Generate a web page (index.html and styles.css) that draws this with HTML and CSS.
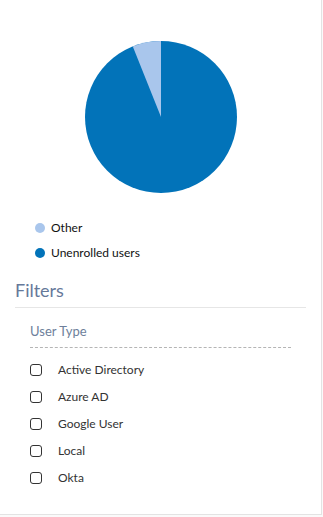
FILE: index.html
```html
<!DOCTYPE html>
<html>
<head>
<meta charset="utf-8">
<link rel="stylesheet" href="styles.css">
</head>
<body>
<div class="card">
  <div class="chart">
    <svg width="154" height="154" viewBox="-77 -77 154 154">
      <circle cx="0" cy="0" r="76" fill="#0273b9"/>
      <path d="M0 0 L0 -76 A76 76 0 0 0 -28.2 -70.6 Z" fill="#a9c6ec"/>
    </svg>
  </div>
  <ul class="legend">
    <li><span class="dot light"></span>Other</li>
    <li><span class="dot dark"></span>Unenrolled users</li>
  </ul>
  <h2 class="filters-title">Filters</h2>
  <div class="group">
    <div class="group-title">User Type</div>
    <ul class="options">
      <li><span class="box"></span>Active Directory</li>
      <li><span class="box"></span>Azure AD</li>
      <li><span class="box"></span>Google User</li>
      <li><span class="box"></span>Local</li>
      <li><span class="box"></span>Okta</li>
    </ul>
  </div>
</div>
</body>
</html>
```
FILE: styles.css
```css
html, body {
  margin: 0;
  padding: 0;
  background: #fafafa;
}
body {
  font-family: Lato, "Open Sans", sans-serif;
}
.card {
  width: 321px;
  height: 514px;
  background: #fff;
  border-right: 1px solid #e3e3e3;
  border-bottom: 1px solid #e3e3e3;
  box-sizing: content-box;
}
.chart {
  display: flex;
  justify-content: center;
  padding-top: 40px;
  padding-left: 1px;
}
.chart svg {
  display: block;
}
.legend {
  list-style: none;
  margin: 0;
  padding: 21px 0 0 35px;
}
.legend li {
  display: flex;
  align-items: center;
  height: 25px;
  font-size: 12px;
  color: #111;
}
.dot {
  width: 10px;
  height: 10px;
  border-radius: 50%;
  margin-right: 6px;
}
.dot.light { background: #a9c6ec; }
.dot.dark { background: #0273b9; }
.filters-title {
  margin: 14px 15px 0 15px;
  padding: 0 0 6px 0;
  font-size: 18px;
  font-weight: 400;
  color: #66799a;
  line-height: 22px;
  border-bottom: 1px solid #e6e6e6;
}
.group {
  padding: 0 30px;
}
.group-title {
  margin-top: 15px;
  font-size: 13px;
  line-height: 16px;
  color: #6e7f9b;
  padding-bottom: 8px;
  border-bottom: 1px dashed #b5b5b5;
}
.options {
  list-style: none;
  margin: 0;
  padding: 8px 0 0 0;
}
.options li {
  display: flex;
  align-items: center;
  height: 27px;
  font-size: 12px;
  color: #333;
}
.box {
  width: 12px;
  height: 12px;
  box-sizing: border-box;
  border: 1.5px solid #333;
  border-radius: 3px;
  margin-right: 16px;
}
```
